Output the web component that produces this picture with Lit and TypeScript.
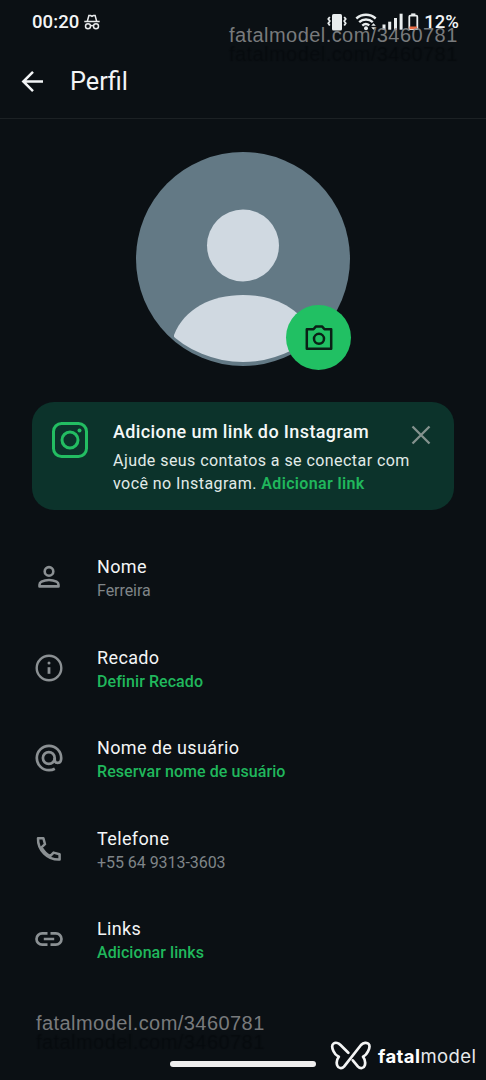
import { LitElement, html, css, svg, nothing } from "lit";
import { customElement, property } from "lit/decorators.js";

const icons: Record<string, unknown> = {
  person: svg`<g fill="none" stroke="currentColor" stroke-width="2.600"><circle cx="15" cy="9.400" r="4.300"/><path d="M5.500 24.400v-1.700c0-1.400.8-2.400 2-3 2.300-1.150 4.800-1.700 7.500-1.700s5.200.55 7.500 1.700c1.200.6 2 1.600 2 3v1.700z" stroke-linejoin="round"/></g>`,
  info: svg`<g fill="none" stroke="currentColor" stroke-width="2.400"><circle cx="15" cy="15" r="12.300"/><path d="M15 14.200v6.600" stroke-width="2.800"/></g><circle cx="15" cy="10" r="1.500" fill="currentColor"/>`,
  at: svg`<g fill="none" stroke="currentColor" stroke-width="2.700"><circle cx="14.800" cy="15" r="5.900"/><path d="M20.700 15v1.700c0 2 1.200 3.200 3 3.200s3.500-1.700 3.500-4.900A12.200 12.200 0 1 0 15 27.200c2.200 0 4-.4 5.800-1.400"/></g>`,
  phone: svg`<path fill="none" stroke="currentColor" stroke-width="2.500" stroke-linejoin="round" d="M4 4.200h5.400l1.600 6-3.500 3.200c2 3.900 4.900 6.800 8.700 8.700l3.400-3.500 6 1.600v5.400c-12 .5-22-9.500-21.600-21.400z"/>`,
  link: svg`<path fill="none" stroke="currentColor" stroke-width="2.700" d="M13.500 20.700H8.200a5.700 5.700 0 0 1 0-11.400h5.300M16.500 9.300h5.300a5.700 5.700 0 0 1 0 11.400h-5.300M9.800 15h10.400"/>`,
};

@customElement("profile-row")
class ProfileRow extends LitElement {
  @property() icon = "";
  @property() label = "";
  @property() value = "";
  @property({ type: Boolean }) action = false;

  static styles = css`
    :host { display: block; height: 90.5px; }
    .row { display: flex; align-items: flex-start; padding-left: 33.500px; }
    .icon { width: 30px; height: 30px; margin: 8px 33.500px 0 0; color: #8b9093; flex: none; }
    .label { color: #f3f5f6; font-size: 18px; line-height: 25px; letter-spacing: 0.370px; }
    .value { color: #7f8588; font-size: 16px; line-height: 23px; letter-spacing: -0.050px; }
    .action { color: #20b75c; font-weight: 500; letter-spacing: 0.070px; }
  `;

  render() {
    return html`<div class="row">
      <svg class="icon" viewBox="0 0 30 30">${icons[this.icon] ?? nothing}</svg>
      <div>
        <div class="label">${this.label}</div>
        <div class="value ${this.action ? "action" : ""}">${this.value}</div>
      </div>
    </div>`;
  }
}

@customElement("link-watermark")
class LinkWatermark extends LitElement {
  static styles = css`
    :host { display: block; font: 400 20px/24px "Liberation Sans", Arial, sans-serif; white-space: nowrap; letter-spacing: 0.440px; }
    .text { color: #8b8d8f; opacity: 0.85; text-shadow: 0 19px 1px rgba(2, 4, 6, 0.42); }
  `;
  render() {
    return html`<div class="text">fatalmodel.com/3460781</div>`;
  }
}

@customElement("app-root")
class AppRoot extends LitElement {
  static styles = css`
    :host { display: block; position: relative; width: 486px; height: 1080px; overflow: hidden; background: #0b1014; color: #f3f5f6; font-family: Roboto, sans-serif; }
    * { box-sizing: border-box; }
    .status { display: flex; align-items: center; height: 43px; padding: 0 27px 0 32px; }
    .clock { font-size: 18.500px; font-weight: 500; letter-spacing: 0.100px; }
    .incognito { width: 16px; height: 16px; margin-left: 5px; }
    .signals { width: 94px; height: 22px; margin-left: auto; margin-right: 3px; }
    .battery { font-size: 18.500px; font-weight: 500; }
    .header { display: flex; align-items: center; height: 76px; border-bottom: 1px solid #1c2124; padding-left: 20px; }
    .back { width: 25px; height: 25px; margin-top: 1px; }
    .title { margin: 3px 0 0 25px; font-size: 25.300px; font-weight: 400; line-height: 30px; }
    .photo { position: relative; width: 214px; height: 214px; margin: 33px 0 0 136px; }
    .avatar { display: block; width: 214px; height: 214px; }
    .camera { position: absolute; right: -1px; bottom: -4px; width: 65px; height: 65px; border-radius: 50%; background: #21c063; display: grid; place-items: center; color: #0a2016; }
    .camera-icon { width: 28px; height: 28px; }
    .card { display: flex; align-items: flex-start; width: 421.500px; height: 108px; margin: 36px 0 0 32px; padding: 18px 20.500px 0 19px; border-radius: 22px; background: #0c332b; }
    .insta { width: 38px; height: 38px; margin: 1px 24px 0 0; flex: none; color: #23bd62; }
    .copy { flex: 1; white-space: nowrap; min-width: 0; }
    .heading { font-size: 18px; font-weight: 500; line-height: 24px; letter-spacing: 0.390px; color: #f4f8f7; }
    .body { margin-top: 5px; font-size: 16px; line-height: 23px; letter-spacing: 0.440px; color: #e2ebe8; }
    .cta { color: #20b75c; font-weight: 600; letter-spacing: 0.350px; }
    .close { width: 24px; height: 24px; margin-top: 3px; flex: none; color: #84928e; }
    .rows { padding-top: 44px; }
    .mark-top { position: absolute; left: 229px; top: 23px; }
    .mark-bottom { position: absolute; left: 36px; top: 1011px; }
    .home { position: absolute; left: 170px; top: 1061px; width: 146px; height: 6px; border-radius: 3px; background: #efefef; }
    .brand { position: absolute; left: 330px; top: 1040px; display: flex; align-items: center; height: 32px; }
    .butterfly { width: 42px; height: 32px; margin-right: 6px; }
    .brand-name { font: 400 18.500px/24px Inter, sans-serif; letter-spacing: 0.420px; color: #e8eaeb; }
    .brand-bold { font-weight: 700; color: #fff; }
  `;

  render() {
    return html`
      <div class="status">
        <span class="clock">00:20</span>
        <svg class="incognito" viewBox="0 0 16 16" fill="none" stroke="#e8eaec" stroke-width="1.500">
          <path d="M.3 7.500h15.400M3.400 7l1.500-5.400h1.600l1.500.7 1.500-.7h1.600L12.600 7"/><circle cx="4" cy="12.200" r="2.500"/><circle cx="12" cy="12.200" r="2.500"/><path d="M6.500 11.800q1.500-.8 3 0"/>
        </svg>
        <svg class="signals" viewBox="0 0 94 22">
          <g fill="#e9edee"><rect x="5" y="3" width="10" height="16.500" rx="1.600"/></g>
          <g fill="none" stroke="#e9edee" stroke-width="1.800"><path d="M2.800 6l-1.500 2 1.500 2-1.500 2.200 1.500 2.300M17.200 6l1.500 2-1.500 2 1.500 2.200-1.500 2.300"/></g>
          <g fill="none" stroke="#e9edee" stroke-width="2.400"><path d="M29.300 7.500a14.500 14.500 0 0 1 19.400 0M32.200 11.200a10 10 0 0 1 13.600 0M35.300 14.600a5.500 5.500 0 0 1 7-.2"/></g>
          <circle cx="39" cy="17.300" r="2" fill="#e9edee"/>
          <path d="M44.200 14.700l2.300-2.500 2.300 2.500zM44.200 16.300l2.300 2.500 2.300-2.500z" fill="#e9edee"/>
          <g fill="#e9edee"><rect x="55.500" y="13.500" width="3" height="5.200"/><rect x="61.200" y="10.700" width="3" height="8"/><rect x="67" y="7" width="3" height="11.700"/><rect x="72.600" y="2.700" width="3" height="16"/></g>
          <rect x="82.300" y="4.700" width="8" height="13.500" rx="1" fill="none" stroke="#e9edee" stroke-width="1.800"/><rect x="84.200" y="2.400" width="4.200" height="2" fill="#e9edee"/><rect x="82.500" y="15.500" width="7.600" height="2.700" fill="#e96b42"/>
        </svg>
        <span class="battery">12%</span>
      </div>
      <div class="header">
        <svg class="back" viewBox="0 0 25 25" fill="none" stroke="#f3f5f6" stroke-width="2.500"><path d="M23 12.500H3.500M13 2.800l-9.700 9.700 9.700 9.700"/></svg>
        <h1 class="title">Perfil</h1>
      </div>
      <div class="photo">
        <svg class="avatar" viewBox="0 0 214 214">
          <defs><clipPath id="round"><circle cx="107" cy="102.500" r="107.500"/></clipPath></defs>
          <circle cx="107" cy="107" r="107" fill="#637985"/>
          <circle cx="107" cy="93.500" r="36" fill="#d0d9e1"/>
          <path clip-path="url(#round)" d="M38 183c10-26 37-40 69-40s59 14 69 40v31H38z" fill="#d0d9e1"/>
        </svg>
        <div class="camera">
          <svg class="camera-icon" viewBox="0 0 28 28" fill="none" stroke="currentColor" stroke-width="2.500" stroke-linejoin="round"><path d="M1.800 5.300h6.700l2.500-2.900h6l2.500 2.900h6.700v19.400H1.800z"/><circle cx="14" cy="14.800" r="5"/></svg>
        </div>
      </div>
      <div class="card">
        <svg class="insta" viewBox="0 0 38 38" fill="none" stroke="currentColor" stroke-width="3"><rect x="2.500" y="2.500" width="33" height="33" rx="8"/><circle cx="19" cy="19" r="8"/><circle cx="28.500" cy="9.500" r="2" fill="currentColor" stroke="none"/></svg>
        <div class="copy">
          <div class="heading">Adicione um link do Instagram</div>
          <div class="body">Ajude seus contatos a se conectar com<br>você no Instagram. <span class="cta">Adicionar link</span></div>
        </div>
        <svg class="close" viewBox="0 0 24 24" fill="none" stroke="currentColor" stroke-width="2.300"><path d="M3.500 3.500l17 17M20.500 3.500l-17 17"/></svg>
      </div>
      <div class="rows">
        <profile-row icon="person" label="Nome" value="Ferreira"></profile-row>
        <profile-row icon="info" label="Recado" value="Definir Recado" action></profile-row>
        <profile-row icon="at" label="Nome de usuário" value="Reservar nome de usuário" action></profile-row>
        <profile-row icon="phone" label="Telefone" value="+55 64 9313-3603"></profile-row>
        <profile-row icon="link" label="Links" value="Adicionar links" action></profile-row>
      </div>
      <link-watermark class="mark-top"></link-watermark>
      <link-watermark class="mark-bottom"></link-watermark>
      <div class="home"></div>
      <div class="brand">
        <svg class="butterfly" viewBox="0 0 42 32" fill="none" stroke="#f4f5f5" stroke-width="2.700" stroke-linecap="round" stroke-linejoin="round"><path d="M18.300 12.700L10.500 5C8.500 3 5.500 2.200 3.600 3.500 1.400 5 2 8 3.500 11.200c1 2.300 2.700 4.300 5.300 5.600-2 2.700-2.500 6-1.600 8.600 1 3 4.600 3.600 6.800 1.200L31 5c2.500-2.500 6-2.900 7.600-1.100 1.600 1.700.8 4.700-.6 7.500-1 2.200-2.600 4.100-4.900 5.400 1.900 2.700 2.500 5.900 1.700 8.600-.9 3-4.500 3.600-6.800 1.200l-5.200-6.200"/></svg>
        <span class="brand-name"><span class="brand-bold">fatal</span>model</span>
      </div>
    `;
  }
}
